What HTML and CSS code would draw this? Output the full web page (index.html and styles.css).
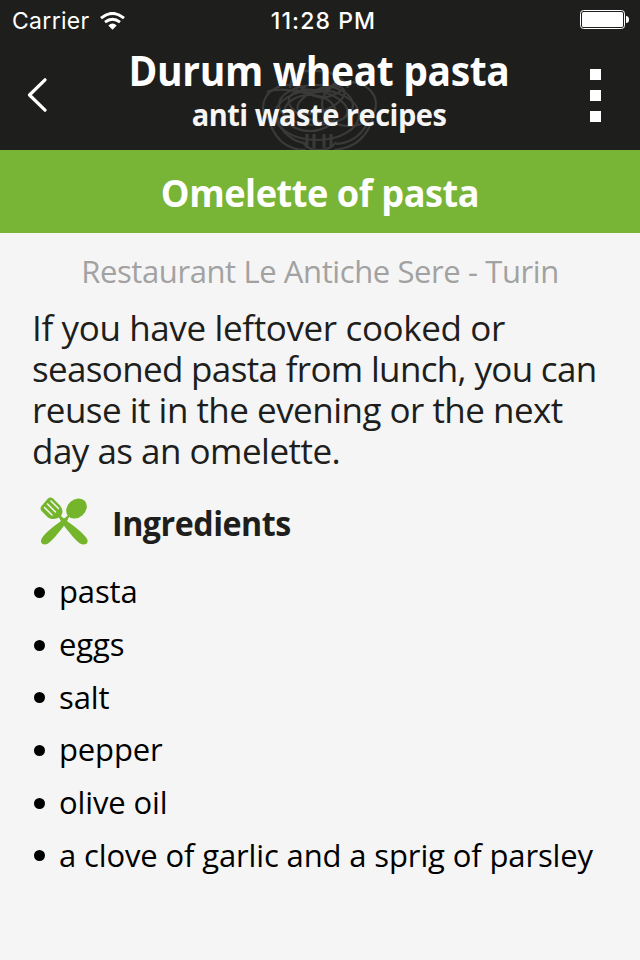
FILE: index.html
```html
<!DOCTYPE html>
<html lang="en">

<head>
    <meta charset="UTF-8">
    <meta name="viewport" content="width=device-width, initial-scale=1.0">
    <title>Omelette of pasta</title>
    <link rel="stylesheet" href="styles.css">
</head>

<body>
    <header class="header">
        <svg class="pasta-bg" viewBox="0 0 120 90" fill="none" stroke="#3a3a39" stroke-width="2.2">
            <path d="M46 26C20 17 3 30 3 46C3 57 14 61 27 60M7 30C22 24 44 30 62 36M8 55C14 78 28 88 46 88M17 44C15 65 28 79 48 82" />
            <path d="M30 26C31 12 40 8 52 9C68 8 84 14 88 26" />
            <ellipse cx="56" cy="43" rx="37" ry="20" />
            <ellipse cx="58" cy="44" rx="30" ry="15" transform="rotate(14 58 44)" />
            <ellipse cx="61" cy="38" rx="25" ry="11" transform="rotate(-22 61 38)" />
            <ellipse cx="89" cy="42" rx="27" ry="22" />
            <ellipse cx="57" cy="53" rx="42" ry="25" />
            <ellipse cx="50" cy="51" rx="26" ry="18" />
            <path d="M33 13C42 34 64 42 82 28M78 18C66 31 52 34 36 28M113 54C108 76 94 86 74 88M107 62C100 75 90 81 76 82" />
            <path d="M47 72v14M54 72v14M64 72v14M71 72v14" stroke-width="3" />
            <path d="M43 80q4 8 16 8t17-8" />
        </svg>

        <div class="status-bar">
            <div class="carrier">
                <span class="carrier-name">Carrier</span>
                <svg class="wifi" width="25" height="18" viewBox="0 0 25 18">
                    <path d="M1 6.2Q12.500-3.400 24 6.200" fill="none" stroke="#fff" stroke-width="3" />
                    <path d="M5 10.200Q12.500 4.200 20 10.200" fill="none" stroke="#fff" stroke-width="2.800" />
                    <path d="M8.300 13.400Q12.500 9.800 16.700 13.400L12.500 17.700z" fill="#fff" />
                </svg>
            </div>
            <div class="clock">11:28 PM</div>
            <svg class="battery" width="49" height="20" viewBox="0 0 49 20">
                <rect x=".5" y=".5" width="44" height="18" rx="3" fill="none" stroke="#fff" />
                <rect x="2" y="2" width="41" height="15" rx="1.500" fill="#fff" />
                <path d="M46 6q3 0 3 3.500T46 13z" fill="#fff" />
            </svg>
        </div>

        <nav class="navbar">
            <a href="#" class="nav-back">
                <svg width="20" height="34" viewBox="0 0 20 34">
                    <path d="M18 1.800L2.500 17l15.500 15.200" fill="none" stroke="#fff" stroke-width="3.200" stroke-linecap="round" stroke-linejoin="round" />
                </svg>
            </a>
            <div class="nav-text">
                <h1 class="nav-title">Durum wheat pasta</h1>
                <p class="nav-subtitle">anti waste recipes</p>
            </div>
            <div class="nav-menu">
                <span></span>
                <span></span>
                <span></span>
            </div>
        </nav>
    </header>

    <div class="recipe-bar">
        <h2 class="recipe-title">Omelette of pasta</h2>
    </div>

    <main class="content">
        <p class="restaurant">Restaurant Le Antiche Sere - Turin</p>
        <p class="description">
            <span class="line-1">If you have leftover cooked or</span>
            <span class="line-2">seasoned pasta from lunch, you can</span>
            <span class="line-3">reuse it in the evening or the next</span>
            <span class="line-4">day as an omelette.</span>
        </p>

        <div class="section-title">
            <svg class="cutlery" width="50" height="50" viewBox="0 0 50 50" fill="#74b52b">
                <!-- handles -->
                <path d="M17 16L28 25C35 30 43 36 47.500 42C51 47 46 50 41 47.500C35 43 29 35 23 27z" />
                <path d="M32 17L22 25C15 30 7 36 3 42C0 47 4 50 9 47.500C15 43 21 35 27 27z" />
                <!-- spoon and fork heads -->
                <ellipse cx="37.500" cy="12.500" rx="11.300" ry="9" transform="rotate(-42 37.500 12.500)" />
                <path d="M2.500 15Q.500 12.500 2.500 10L8.500 3Q11 .500 14 2.500L20 8.500C24 12.500 24.500 17 21.500 20.500C18 23.500 12 24 8.500 21z" />
                <path d="M5.500 11.500l7.500 7.500M8.500 8l8 8M12 5l7.500 7.500" fill="none" stroke="#f5f5f5" stroke-width="1.500" stroke-linecap="round" />
            </svg>
            <h3>Ingredients</h3>
        </div>

        <ul class="ingredients">
            <li>pasta</li>
            <li>eggs</li>
            <li>salt</li>
            <li>pepper</li>
            <li>olive oil</li>
            <li>a clove of garlic and a sprig of parsley</li>
        </ul>
    </main>
</body>

</html>
```
FILE: styles.css
```css
* {
    margin: 0;
    padding: 0;
    box-sizing: border-box;
}

body {
    font-family: 'Open Sans', sans-serif;
    color: #1e1e1c;
    background-color: #f5f5f5;
    overflow: hidden;
    white-space: nowrap;
}

.header {
    position: relative;
    height: 150px;
    background-color: #1e1e1c;
    color: #fff;
    overflow: hidden;
}

/* faded plate of spaghetti behind the titles */
.pasta-bg {
    position: absolute;
    left: 260px;
    top: 62px;
    width: 120px;
    height: 90px;
}

.status-bar {
    position: relative;
    display: grid;
    grid-template-columns: 1fr auto 1fr;
    align-items: center;
    height: 40px;
    padding: 0 11px 0 12px;
    font-family: 'Inter', sans-serif;
    font-size: 23px;
}

.carrier {
    display: flex;
    align-items: center;
    gap: 10px;
    padding-top: 1px;
}

.carrier-name {
    letter-spacing: 0.3px;
}

.clock {
    font-weight: 500;
    letter-spacing: 1.1px;
    padding: 1px 0 0 6px;
}

.battery {
    justify-self: end;
}

.navbar {
    position: relative;
    display: flex;
    justify-content: space-between;
    height: 110px;
    padding: 0 39px 0 27px;
}

.nav-back {
    width: 20px;
    padding-top: 38px;
}

.nav-text {
    text-align: center;
}

.nav-title {
    font-size: 42px;
    line-height: 60px;
    letter-spacing: -0.4px;
    transform: translateX(1px) scaleX(0.929);
}

.nav-subtitle {
    font-size: 30px;
    font-weight: 700;
    line-height: 30px;
    color: #f5f5f5;
    letter-spacing: -0.5px;
    transform: translateX(1px) scaleX(0.966);
}

.nav-menu {
    display: flex;
    flex-direction: column;
    gap: 10px;
    padding-top: 29px;
}

.nav-menu span {
    width: 11px;
    height: 11px;
    background-color: #fff;
}

.recipe-bar {
    height: 83px;
    background-color: #78b436;
}

.recipe-title {
    line-height: 85px;
    color: #fff;
    font-size: 38px;
    text-align: center;
    letter-spacing: -0.5px;
    transform: scaleX(0.952);
}

.content {
    padding: 18px 32px 0;
}

.restaurant {
    color: #a2a2a2;
    font-size: 31px;
    line-height: 40px;
    text-align: center;
    letter-spacing: -0.4px;
}

.description {
    margin-top: 16px;
    font-size: 35px;
    line-height: 41px;
}

.description span {
    display: block;
}

.line-1 {
    letter-spacing: -0.37px;
}

.line-2 {
    letter-spacing: -0.67px;
}

.line-3,
.line-4 {
    letter-spacing: -0.52px;
}

.section-title {
    display: flex;
    align-items: center;
    gap: 23px;
    height: 50px;
    margin: 25px 0 19px 7px;
}

.section-title h3 {
    padding-top: 3px;
    font-size: 34px;
    letter-spacing: -0.5px;
    transform: scaleX(0.947);
    transform-origin: left;
}

.ingredients {
    list-style: none;
    color: #000;
    font-size: 31px;
    letter-spacing: -0.13px;
}

.ingredients li {
    display: flex;
    align-items: center;
    gap: 14px;
    height: 52.7px;
}

.ingredients li::before {
    content: "";
    width: 11px;
    height: 11px;
    margin: 2px 0 0 2px;
    border-radius: 50%;
    background-color: #000;
}
```
